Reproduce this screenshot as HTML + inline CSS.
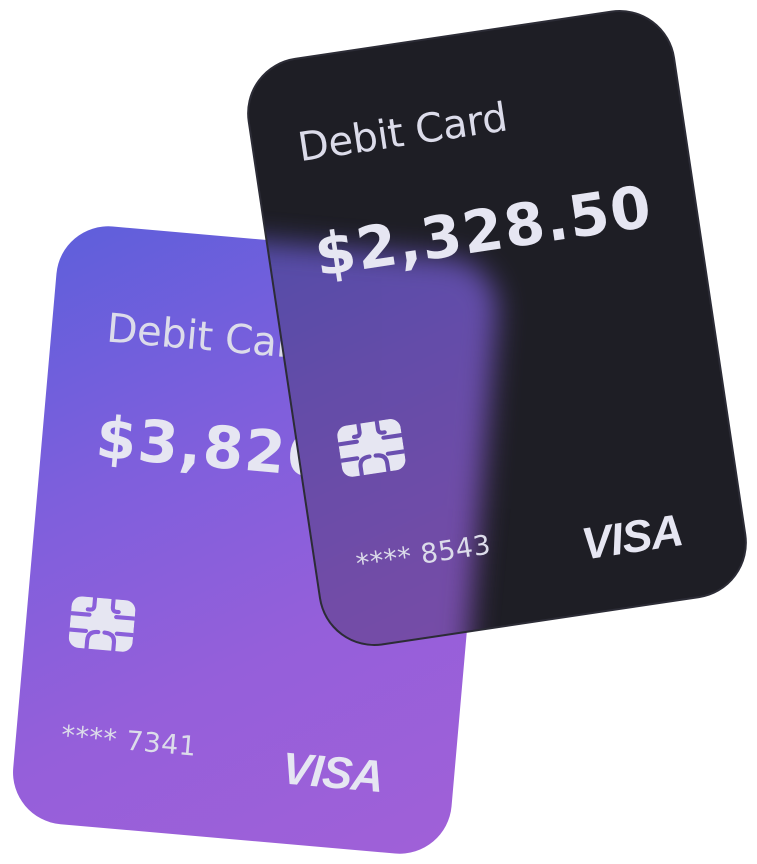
<!DOCTYPE html>
<html><head><meta charset="utf-8"><style>
html,body{margin:0;padding:0;width:757px;height:864px;background:#fff;overflow:hidden;position:relative;font-family:"Liberation Sans","DejaVu Sans",sans-serif;}
.card{position:absolute;width:440px;height:600px;border-radius:52px;box-sizing:border-box;}
.purple{left:34px;top:240px;transform:rotate(5deg);background:linear-gradient(150deg,#5e5fdb 0%,#7f5fdc 35%,#955fda 65%,#a060d8 100%);}
.dark{left:281px;top:31px;width:432px;height:594px;transform:rotate(-8.5deg);background:#1e1e25;overflow:hidden;border:2px solid #2c2c36;border-radius:56px;}
.t{position:absolute;color:#dcdcea;white-space:nowrap;line-height:1;}
.title{font-size:40px;font-family:"DejaVu Sans",sans-serif;font-weight:normal;letter-spacing:-0.3px;}
.amt{font-size:58px;font-weight:bold;font-family:"DejaVu Sans",sans-serif;letter-spacing:1.5px;color:#e6e6f2;}
.num{font-size:27px;font-family:"DejaVu Sans",sans-serif;letter-spacing:0.5px;}
.visa{font-size:45px;font-weight:bold;font-style:italic;letter-spacing:-1px;color:#e6e6f2;}
.chip{position:absolute;width:64px;height:52px;}
.layer{position:absolute;left:-281px;top:-31px;width:757px;height:864px;transform-origin:496px 328px;transform:rotate(8.5deg);}
.ghost{filter:blur(14px);opacity:.72;}
</style></head><body>

<div class="card purple">
  <div class="t title" style="left:55px;top:82px">Debit Card</div>
  <div class="t amt" style="left:54px;top:182px">$3,826.20</div>
  <svg class="chip" style="left:44px;top:371px" viewBox="0 0 62 50"><rect x="0" y="0" width="62" height="50" rx="10" fill="#e6e6f2"/><g fill="none" stroke="#8a5fda" stroke-width="4" stroke-linecap="round"><path d="M-2 17H18M-2 33H16M44 17H64M46 33H64"/><path d="M22 -2V8q0 4 -4 4h-2M40 -2V8q0 4 4 4h2"/><path d="M18 52V42q0-9 10-9M44 52V42q0-9-10-9"/></g></svg>
  <div class="t num" style="left:45px;top:498px">**** 7341</div>
  <div class="t visa" style="left:268px;top:502px">VISA</div>
</div>

<div class="card dark">
  <div class="layer">
    <div class="card purple ghost"></div>
  </div>
  <div class="t title" style="left:44px;top:68px">Debit Card</div>
  <div class="t amt" style="left:45px;top:168px">$2,328.50</div>
  <svg class="chip" style="left:40px;top:369px" viewBox="0 0 62 50"><rect x="0" y="0" width="62" height="50" rx="10" fill="#e6e6f2"/><g fill="none" stroke="#6a4fb0" stroke-width="4" stroke-linecap="round"><path d="M-2 17H18M-2 33H16M44 17H64M46 33H64"/><path d="M22 -2V8q0 4 -4 4h-2M40 -2V8q0 4 4 4h2"/><path d="M18 52V42q0-9 10-9M44 52V42q0-9-10-9"/></g></svg>
  <div class="t num" style="left:40px;top:495px">**** 8543</div>
  <div class="t visa" style="left:266px;top:499px">VISA</div>
</div>
</body></html>
